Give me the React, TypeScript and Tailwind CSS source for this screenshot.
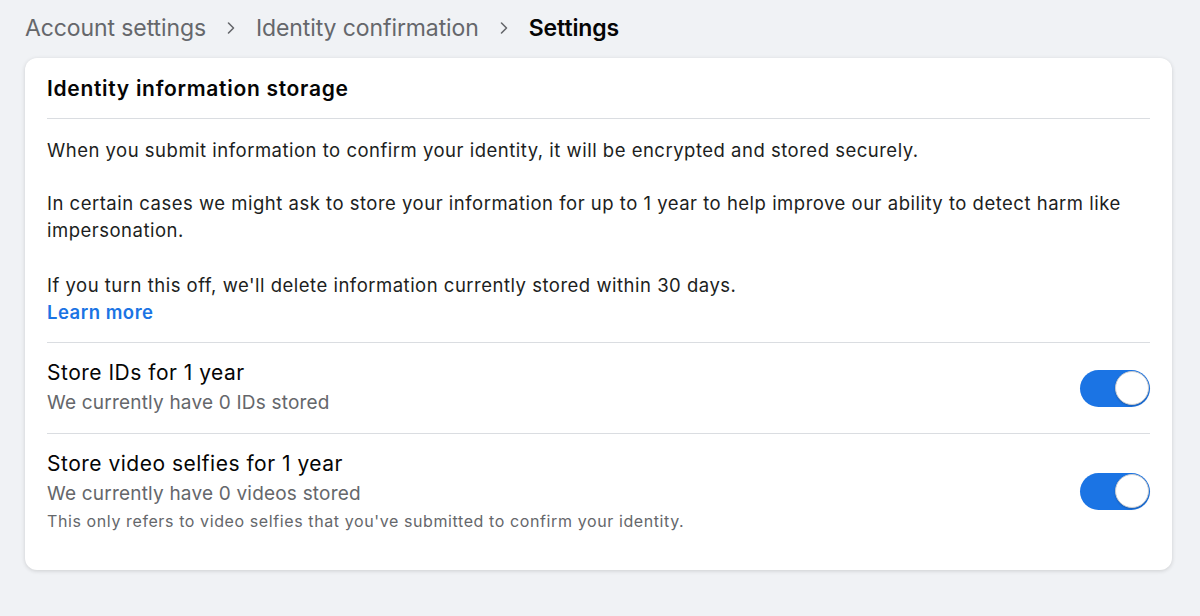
import { useState } from "react";

function Toggle({ on, onChange }: { on: boolean; onChange: () => void }) {
  return (
    <button
      onClick={onChange}
      className={`relative w-[70px] h-[37px] rounded-full shrink-0 transition-colors ${on ? "bg-[#1b74e4]" : "bg-[#ccd0d5]"}`}
    >
      <span
        className={`absolute top-[1.5px] w-[34px] h-[34px] rounded-full bg-white border border-[#c9ccd1] shadow-[0_1px_2px_rgba(0,0,0,0.2)] transition-all ${on ? "left-[34.5px]" : "left-[1.5px]"}`}
      />
    </button>
  );
}

function Chevron() {
  return (
    <svg width="12" height="14" viewBox="0 0 12 14" fill="none" className="text-[#65676b]">
      <path d="M3.5 2l5 5-5 5" stroke="currentColor" strokeWidth="1.6" strokeLinecap="round" strokeLinejoin="round" />
    </svg>
  );
}

export default function App() {
  const [ids, setIds] = useState(true);
  const [videos, setVideos] = useState(true);

  return (
    <div className="min-h-[616px] bg-[#f0f2f5] pl-[25px] pr-[28px] pt-[13px] font-['Inter',sans-serif] text-[#1c1e21]">
      <nav className="flex items-center gap-[19px] text-[23px] leading-[30px] tracking-[-0.1px]">
        <span className="text-[#65676b]">Account settings</span>
        <Chevron />
        <span className="text-[#65676b]">Identity confirmation</span>
        <Chevron />
        <span className="font-semibold text-[#050505]">Settings</span>
      </nav>

      <div className="mt-[15px] bg-white rounded-[12px] shadow-[0_1px_4px_rgba(0,0,0,0.15)] px-[22px] pb-[37px]">
        <h2 className="pt-[16px] pb-[14px] text-[21px] leading-[30px] font-semibold tracking-[0.7px] text-[#050505] border-b border-[#dadde1]">
          Identity information storage
        </h2>

        <div className="pt-[18px] pb-[16px] text-[18.5px] leading-[27px] tracking-[0.5px] border-b border-[#dadde1]">
          <p>When you submit information to confirm your identity, it will be encrypted and stored securely.</p>
          <p className="mt-[26px]">
            In certain cases we might ask to store your information for up to 1 year to help improve our ability to detect harm like impersonation.
          </p>
          <p className="mt-[28px]">If you turn this off, we'll delete information currently stored within 30 days.</p>
          <a href="#" className="text-[#1b74e4] font-semibold">Learn more</a>
        </div>

        <div className="flex items-center justify-between py-[15px] border-b border-[#dadde1]">
          <div>
            <div className="text-[21px] leading-[30px] tracking-[0.5px] text-[#050505]">Store IDs for 1 year</div>
            <div className="text-[19px] leading-[30px] tracking-[0.2px] text-[#65676b]">We currently have 0 IDs stored</div>
          </div>
          <Toggle on={ids} onChange={() => setIds(!ids)} />
        </div>

        <div className="flex items-center justify-between pt-[15px]">
          <div>
            <div className="text-[21px] leading-[30px] tracking-[0.5px] text-[#050505]">Store video selfies for 1 year</div>
            <div className="text-[19px] leading-[30px] tracking-[0.2px] text-[#65676b]">We currently have 0 videos stored</div>
            <div className="text-[16px] leading-[24px] tracking-[0.6px] text-[#65676b]">
              This only refers to video selfies that you've submitted to confirm your identity.
            </div>
          </div>
          <Toggle on={videos} onChange={() => setVideos(!videos)} />
        </div>
      </div>
    </div>
  );
}
